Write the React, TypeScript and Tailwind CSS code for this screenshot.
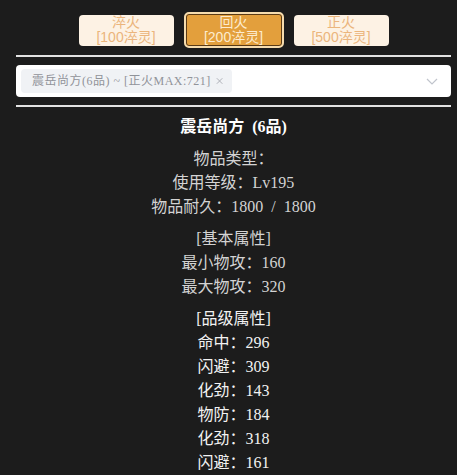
import { useState } from "react";

const fireOptions = [
  { name: "淬火", cost: "[100淬灵]" },
  { name: "回火", cost: "[200淬灵]" },
  { name: "正火", cost: "[500淬灵]" },
];

const baseInfo = ["物品类型：", "使用等级：Lv195", "物品耐久：1800 / 1800"];
const baseStats = ["最小物攻：160", "最大物攻：320"];
const gradeStats = ["命中：296", "闪避：309", "化劲：143", "物防：184", "化劲：318", "闪避：161"];

const font = { fontFamily: '"Liberation Serif", "Noto Sans CJK SC", serif' };
const sans = { fontFamily: '"Liberation Sans", "Noto Sans CJK SC", sans-serif' };

export default function App() {
  const [active, setActive] = useState(1);

  return (
    <div className="min-h-screen bg-[#1c1c1c] pl-4 pr-[6px] pt-3" style={font}>
      {/* FIRE BUTTONS */}
      <div className="flex items-center justify-center gap-[10px] h-[36px]" style={sans}>
        {fireOptions.map((opt, i) =>
          i === active ? (
            <button
              key={opt.name}
              onClick={() => setActive(i)}
              className="w-[100px] h-[36px] rounded-[5px] border-2 border-[#f6dcae] bg-[#e39f3c] shadow-[inset_0_0_0_1px_#5a3a14] text-[#fdeccf] text-[14px] leading-[15px] flex flex-col items-center justify-center"
            >
              <span>{opt.name}</span>
              <span>{opt.cost}</span>
            </button>
          ) : (
            <button
              key={opt.name}
              onClick={() => setActive(i)}
              className="w-[95px] h-[31px] rounded-[4px] bg-[#fdf2e4] text-[#ebb57c] text-[14px] leading-[15px] flex flex-col items-center justify-center"
            >
              <span>{opt.name}</span>
              <span>{opt.cost}</span>
            </button>
          )
        )}
      </div>

      <div className="h-[2px] bg-[#e2e2e2] mt-[7px]" />

      {/* SELECT */}
      <div className="mt-2 h-[32px] bg-white rounded-[4px] flex items-center pl-[5px] pr-[12px]">
        <div className="h-[24px] w-[211px] bg-[#f0f2f5] rounded-[4px] flex items-center pl-[11px] pr-[8px] text-[12px] text-[#909399] tracking-[0.5px]">
          <span className="flex-1 whitespace-nowrap">震岳尚方(6品) ~ [正火MAX:721]</span>
          <svg width="10" height="10" viewBox="0 0 10 10" className="ml-1">
            <path d="M2 2 L8 8 M8 2 L2 8" stroke="#a8abb2" strokeWidth="1" />
          </svg>
        </div>
        <div className="flex-1" />
        <svg width="14" height="14" viewBox="0 0 14 14">
          <path d="M2 5 L7 10 L12 5" stroke="#c0c4cc" strokeWidth="1.2" fill="none" />
        </svg>
      </div>

      <div className="h-[2px] bg-[#e2e2e2] mt-2" />

      {/* ITEM DETAIL */}
      <div className="pt-2 flex flex-col items-center text-[16px] leading-[24px] [word-spacing:4px]">
        <div className="text-white font-bold">震岳尚方 (6品)</div>
        <div className="mt-2 flex flex-col items-center text-[#d3d3d3]">
          {baseInfo.map((line) => (
            <div key={line}>{line}</div>
          ))}
        </div>
        <div className="mt-2 flex flex-col items-center text-[#d3d3d3]">
          <div>[基本属性]</div>
          {baseStats.map((line) => (
            <div key={line}>{line}</div>
          ))}
        </div>
        <div className="mt-2 flex flex-col items-center text-[#f2f2f2]">
          <div>[品级属性]</div>
          {gradeStats.map((line, i) => (
            <div key={i}>{line}</div>
          ))}
        </div>
      </div>
    </div>
  );
}
